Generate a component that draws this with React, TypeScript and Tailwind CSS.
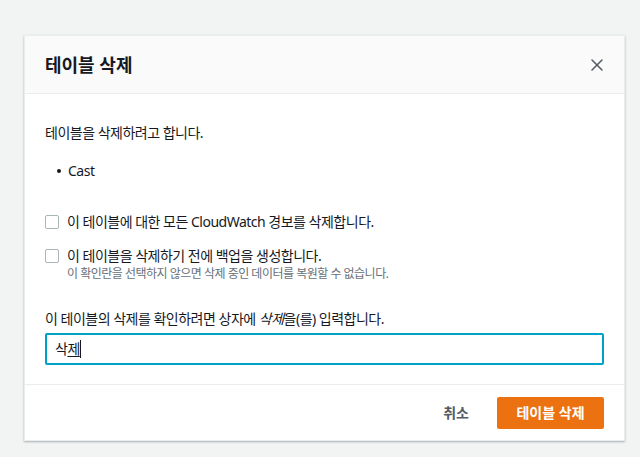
import { X } from "lucide-react";

const FONT = { fontFamily: '"Noto Sans", "Noto Sans CJK KR", sans-serif' };

export default function App() {
  return (
    <div className="h-[457px] w-[640px] bg-[#f2f3f3] pt-[35px] pl-[24px] overflow-hidden" style={FONT}>
      <div className="w-[601px] h-[406px] bg-white border border-[#eaeded] shadow-[0_1px_2px_rgba(0,28,36,0.3)] flex flex-col text-[#16191f]">
        {/* Header */}
        <div className="h-[58px] shrink-0 bg-[#fafafa] border-b border-[#eaeded] flex items-center justify-between pl-[20px] pr-[17px]">
          <h2 className="text-[18px] font-bold leading-[22px]">테이블 삭제</h2>
          <button className="text-[#545b64]">
            <X size={20} strokeWidth={1.8} />
          </button>
        </div>

        {/* Body */}
        <div className="flex-1 px-[20px] pt-[29px] text-[14px] leading-[20px] tracking-[-0.5px]">
          <p>테이블을 삭제하려고 합니다.</p>
          <ul className="mt-[18px] pl-[12px]">
            <li className="flex items-center gap-[7px]">
              <span className="w-[4px] h-[4px] rounded-full bg-[#16191f]" />
              Cast
            </li>
          </ul>

          <label className="mt-[31px] flex items-center gap-[8px]">
            <span className="w-[14px] h-[14px] rounded-[2px] border border-[#aab7b8] bg-white" />
            이 테이블에 대한 모든 CloudWatch 경보를 삭제합니다.
          </label>

          <div className="mt-[14px] flex items-start gap-[8px]">
            <span className="mt-[3px] w-[14px] h-[14px] rounded-[2px] border border-[#aab7b8] bg-white shrink-0" />
            <div>
              <div>이 테이블을 삭제하기 전에 백업을 생성합니다.</div>
              <div className="text-[12px] leading-[16px] text-[#687078]">
                이 확인란을 선택하지 않으면 삭제 중인 데이터를 복원할 수 없습니다.
              </div>
            </div>
          </div>

          <p className="mt-[27px]">
            이 테이블의 삭제를 확인하려면 상자에 <i>삭제</i>을(를) 입력합니다.
          </p>
          <div className="mt-[4px] h-[32px] border-2 border-[#00a1c9] rounded-[2px] flex items-center px-[8px]">
            <span>삭</span>
            <span className="underline underline-offset-2">제</span>
            <span className="w-px h-[18px] bg-[#16191f]" />
          </div>
        </div>

        {/* Footer */}
        <div className="h-[56px] shrink-0 border-t border-[#eaeded] flex items-center justify-end gap-[28px] px-[20px]">
          <button className="text-[14px] font-bold text-[#545b64]">취소</button>
          <button className="h-[32px] w-[107px] rounded-[2px] bg-[#ec7211] text-white text-[14px] font-bold">
            테이블 삭제
          </button>
        </div>
      </div>
    </div>
  );
}
